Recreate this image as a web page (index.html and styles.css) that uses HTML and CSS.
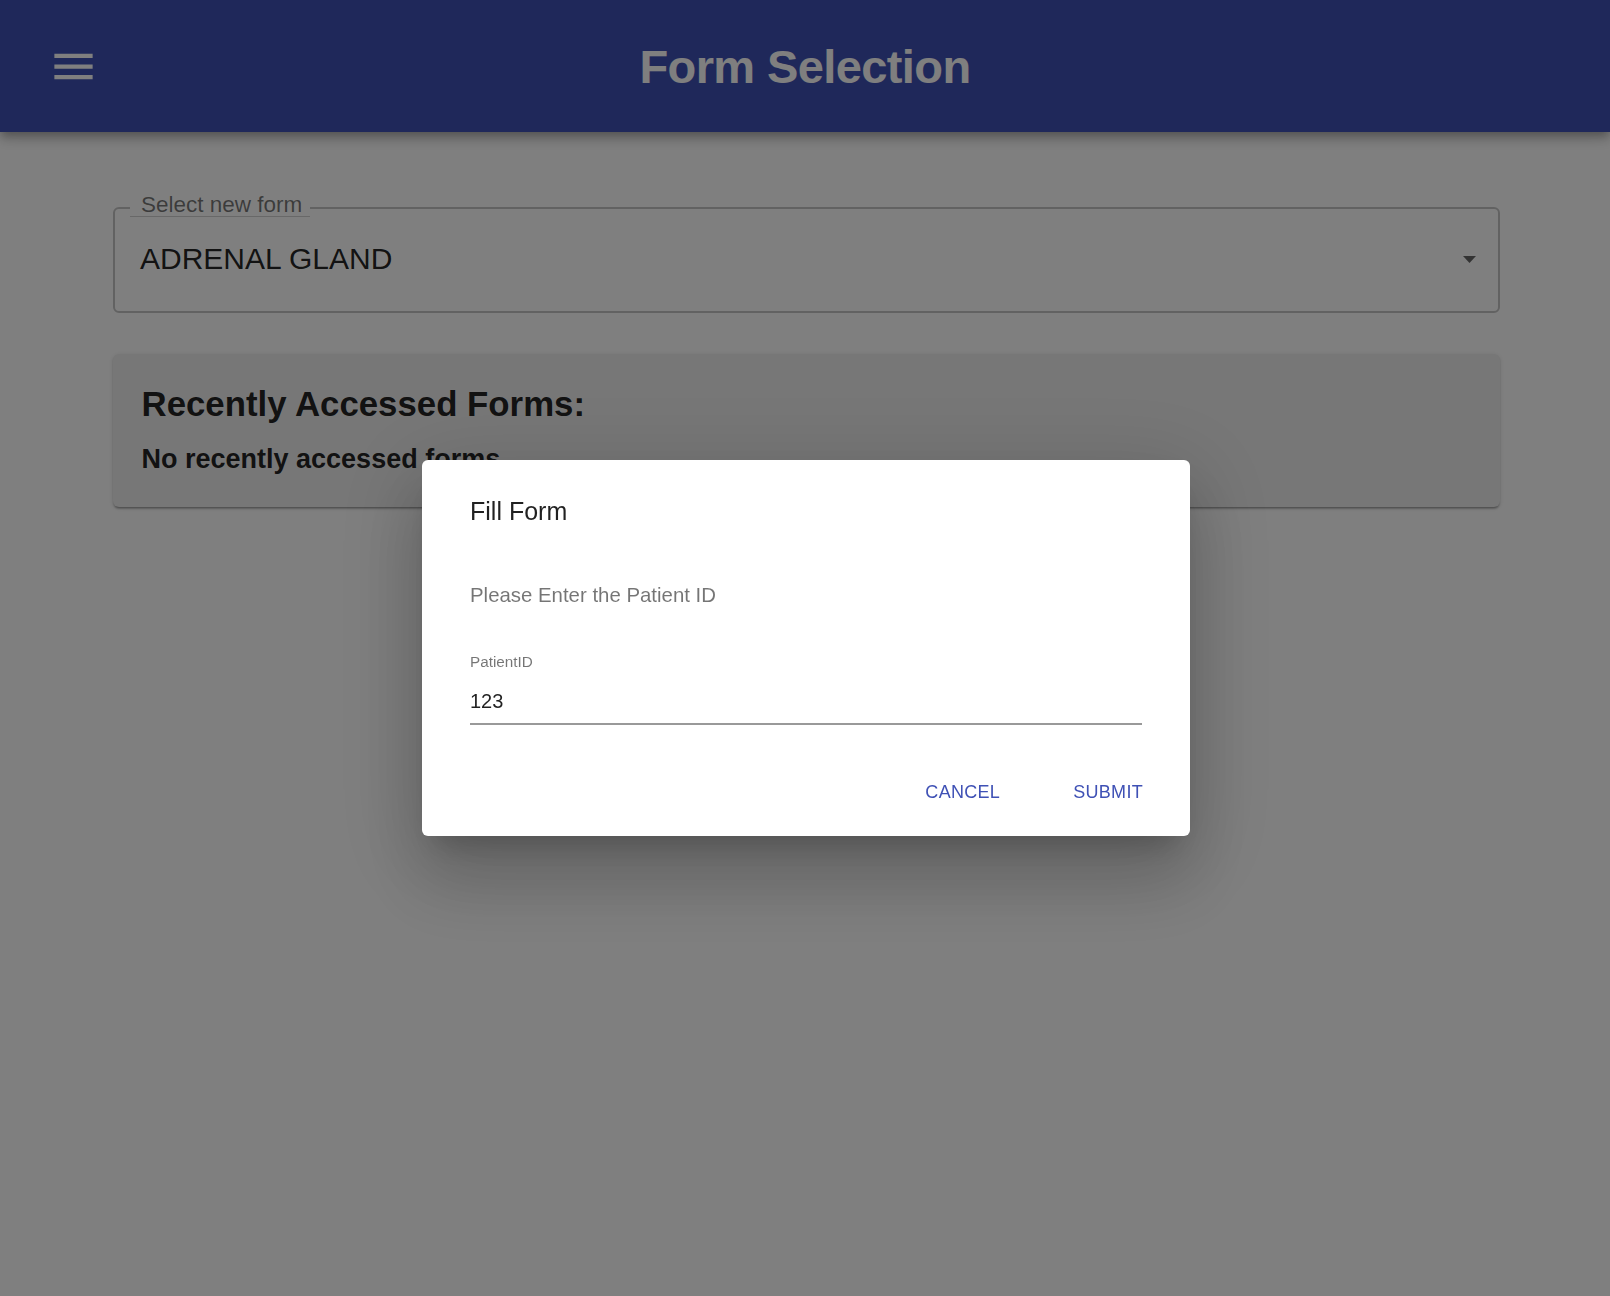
FILE: index.html
```html
<!DOCTYPE html>
<html lang="en">
<head>
<meta charset="utf-8">
<title>Form Selection</title>
<link rel="stylesheet" href="styles.css">
</head>
<body>
<header class="appbar">
  <div class="appbar-left">
    <svg class="menu-icon" viewBox="0 0 24 24" width="51" height="51" aria-hidden="true">
      <path d="M3 18h18v-2H3v2zm0-5h18v-2H3v2zm0-7v2h18V6H3z" fill="#ffffff"/>
    </svg>
  </div>
  <h1 class="appbar-title">Form Selection</h1>
  <div class="appbar-right"></div>
</header>

<main class="content">
  <div class="select-field">
    <span class="select-label">Select new form</span>
    <div class="select-value">ADRENAL GLAND</div>
    <svg class="select-arrow" viewBox="0 0 13 7" width="13" height="7" aria-hidden="true">
      <path d="M0 0h13L6.5 7z" fill="rgba(0,0,0,0.6)"/>
    </svg>
  </div>

  <section class="recent-card">
    <h2 class="recent-title">Recently Accessed Forms:</h2>
    <p class="recent-empty">No recently accessed forms</p>
  </section>
</main>

<div class="backdrop">
  <div class="dialog" role="dialog">
    <h3 class="dialog-title">Fill Form</h3>
    <p class="dialog-text">Please Enter the Patient ID</p>
    <div class="text-field">
      <label class="text-label">PatientID</label>
      <div class="text-input">123</div>
    </div>
    <div class="dialog-actions">
      <button class="btn">CANCEL</button>
      <button class="btn">SUBMIT</button>
    </div>
  </div>
</div>
</body>
</html>
```

FILE: styles.css
```css
* {
  box-sizing: border-box;
}

html, body {
  margin: 0;
  padding: 0;
}

body {
  font-family: "Liberation Sans", Arial, Helvetica, sans-serif;
  background: #ffffff;
  color: rgba(0, 0, 0, 0.87);
  min-height: 1296px;
}

/* ---------- App bar ---------- */
.appbar {
  height: 132px;
  background: #3f51b5;
  display: grid;
  grid-template-columns: 1fr auto 1fr;
  align-items: center;
  box-shadow: 0 4px 8px -2px rgba(0, 0, 0, 0.2),
              0 8px 10px 0 rgba(0, 0, 0, 0.14),
              0 2px 19px 0 rgba(0, 0, 0, 0.12);
  position: relative;
  z-index: 1;
}

.appbar-left {
  display: flex;
  align-items: center;
  padding-left: 48px;
  padding-top: 1px;
}

.menu-icon {
  display: block;
}

.appbar-title {
  margin: 0;
  padding-top: 2px;
  color: #ffffff;
  font-size: 47px;
  line-height: 52px;
  font-weight: 700;
  letter-spacing: -0.6px;
  text-align: center;
}

/* ---------- Content ---------- */
.content {
  margin-left: 113px;
  width: 1387px;
  padding-top: 75px;
}

.select-field {
  position: relative;
  height: 106px;
  border: 2px solid #c4c4c4;
  border-radius: 6px;
  display: flex;
  align-items: center;
  justify-content: space-between;
  padding: 0 22px 0 25px;
}

.select-label {
  position: absolute;
  left: 15px;
  top: -16px;
  width: 180px;
  padding-left: 11px;
  background: #ffffff;
  color: rgba(0, 0, 0, 0.54);
  font-size: 22.5px;
  line-height: 23px;
  border-bottom: 1px solid rgba(0, 0, 0, 0.18);
  white-space: nowrap;
}

.select-value {
  font-size: 30px;
  line-height: 36px;
  color: rgba(0, 0, 0, 0.87);
  margin-top: -3px;
}

.select-arrow {
  display: block;
  margin-top: -2px;
}

.recent-card {
  margin-top: 41px;
  background: #eeeeee;
  border-radius: 6px;
  padding: 30px 28px 32px 28.5px;
  box-shadow: 0 3px 2px -2px rgba(0, 0, 0, 0.25),
              0 2px 2px 0 rgba(0, 0, 0, 0.14),
              0 1px 5px 0 rgba(0, 0, 0, 0.12);
}

.recent-title {
  margin: 0;
  font-size: 34.8px;
  line-height: 40px;
  font-weight: 700;
  color: rgba(0, 0, 0, 0.87);
}

.recent-empty {
  margin: 19px 0 0;
  font-size: 27px;
  line-height: 32px;
  font-weight: 700;
  color: rgba(0, 0, 0, 0.87);
}

/* ---------- Dialog ---------- */
.backdrop {
  position: fixed;
  inset: 0;
  background: rgba(0, 0, 0, 0.5);
  display: flex;
  align-items: center;
  justify-content: center;
  z-index: 10;
}

.dialog {
  width: 768px;
  background: #ffffff;
  border-radius: 6px;
  padding: 31px 48px 32px;
  margin-left: 2px;
  box-shadow: 0 20px 28px -13px rgba(0, 0, 0, 0.2),
              0 45px 71px 6px rgba(0, 0, 0, 0.14),
              0 17px 86px 15px rgba(0, 0, 0, 0.12);
}

.dialog-title {
  margin: 0;
  font-size: 25px;
  line-height: 40px;
  font-weight: 400;
  color: rgba(0, 0, 0, 0.87);
}

.dialog-text {
  margin: 48.6px 0 0;
  font-size: 20.4px;
  line-height: 30px;
  color: rgba(0, 0, 0, 0.54);
}

.text-field {
  margin-top: 41.7px;
}

.text-label {
  display: block;
  font-size: 15.3px;
  line-height: 20px;
  color: rgba(0, 0, 0, 0.54);
}

.text-input {
  margin-top: 15.4px;
  font-size: 20px;
  line-height: 28px;
  padding-bottom: 8px;
  border-bottom: 2px solid rgba(0, 0, 0, 0.4);
  color: rgba(0, 0, 0, 0.87);
}

.dialog-actions {
  margin-top: 54.8px;
  display: flex;
  justify-content: flex-end;
  gap: 73px;
  margin-right: -1px;
}

.btn {
  font-family: "Liberation Sans", Arial, Helvetica, sans-serif;
  font-size: 18px;
  line-height: 24px;
  background: none;
  border: 0;
  padding: 0;
  margin: 0;
  color: #3f51b5;
  letter-spacing: 0.3px;
  cursor: pointer;
}
```
